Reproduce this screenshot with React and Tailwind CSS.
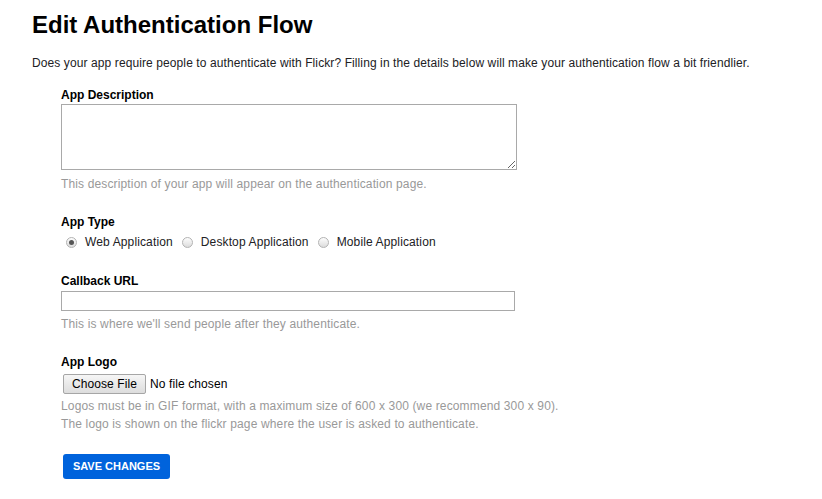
import React, { useState } from 'react';

const font = { fontFamily: '"Liberation Sans", Arial, sans-serif' };

function Radio({ label, checked, onClick }) {
  return (
    <label className="flex items-center cursor-pointer" onClick={onClick}>
      <span className="ml-[5px] mr-[8px] w-[11px] h-[11px] rounded-full border border-[#b3b3b3] bg-gradient-to-b from-[#fdfdfd] to-[#dcdcdc] flex items-center justify-center">
        {checked && <span className="w-[5px] h-[5px] rounded-full bg-[#555555]"></span>}
      </span>
      <span className="text-[12px] leading-[18px] tracking-[0.13px] text-[#212124]">{label}</span>
    </label>
  );
}

export default function App() {
  const [appType, setAppType] = useState('web');

  return (
    <div className="min-h-screen bg-white px-[32px]" style={font}>
      {/* Heading */}
      <h1 className="pt-[11px] text-[24px] leading-[28px] font-bold text-black">Edit Authentication Flow</h1>
      <p className="mt-[15px] text-[12px] leading-[18px] tracking-[0.1px] text-[#212124]">
        Does your app require people to authenticate with Flickr? Filling in the details below will make your authentication flow a bit friendlier.
      </p>

      <form className="pl-[29px] flex flex-col items-start" onSubmit={e => e.preventDefault()}>
        {/* App Description */}
        <label className="mt-[16px] text-[12px] leading-[15px] font-bold text-black">App Description</label>
        <textarea className="mt-[1px] w-[456px] h-[66px] border border-[#a9a9a9] bg-white outline-none text-[12px] p-[2px]"></textarea>
        <p className="mt-[5px] text-[12px] leading-[18px] tracking-[0.14px] text-[#999999]">This description of your app will appear on the authentication page.</p>

        {/* App Type */}
        <label className="mt-[22px] text-[12px] leading-[15px] font-bold text-black">App Type</label>
        <div className="mt-[3px] flex items-center gap-[4px]">
          <Radio label="Web Application" checked={appType === 'web'} onClick={() => setAppType('web')} />
          <Radio label="Desktop Application" checked={appType === 'desktop'} onClick={() => setAppType('desktop')} />
          <Radio label="Mobile Application" checked={appType === 'mobile'} onClick={() => setAppType('mobile')} />
        </div>

        {/* Callback URL */}
        <label className="mt-[23px] text-[12px] leading-[15px] font-bold text-black">Callback URL</label>
        <input type="text" className="mt-[2px] w-[454px] h-[20px] border border-[#a9a9a9] bg-white outline-none text-[12px] px-[2px]" />
        <p className="mt-[4px] text-[12px] leading-[18px] tracking-[0.14px] text-[#999999]">This is where we'll send people after they authenticate.</p>

        {/* App Logo */}
        <label className="mt-[22px] text-[12px] leading-[15px] font-bold text-black">App Logo</label>
        <div className="mt-[4px] ml-[2px] flex items-center">
          <button type="button" className="w-[83px] h-[20px] rounded-[2px] border border-[#a6a6a6] bg-gradient-to-b from-[#f6f6f6] to-[#dddddd] text-[12px] tracking-[0.1px] text-black leading-[18px]">
            Choose File
          </button>
          <span className="ml-[4px] text-[12px] tracking-[0.1px] text-black">No file chosen</span>
        </div>
        <p className="mt-[3px] text-[12px] leading-[18px] tracking-[0.14px] text-[#999999]">
          Logos must be in GIF format, with a maximum size of 600 x 300 (we recommend 300 x 90).<br />
          The logo is shown on the flickr page where the user is asked to authenticate.
        </p>

        <button type="submit" className="mt-[21px] ml-[2px] w-[107px] h-[25px] rounded-[3px] bg-[#0063dc] text-white text-[11px] font-bold flex items-center justify-center">
          SAVE CHANGES
        </button>
      </form>
    </div>
  );
}
